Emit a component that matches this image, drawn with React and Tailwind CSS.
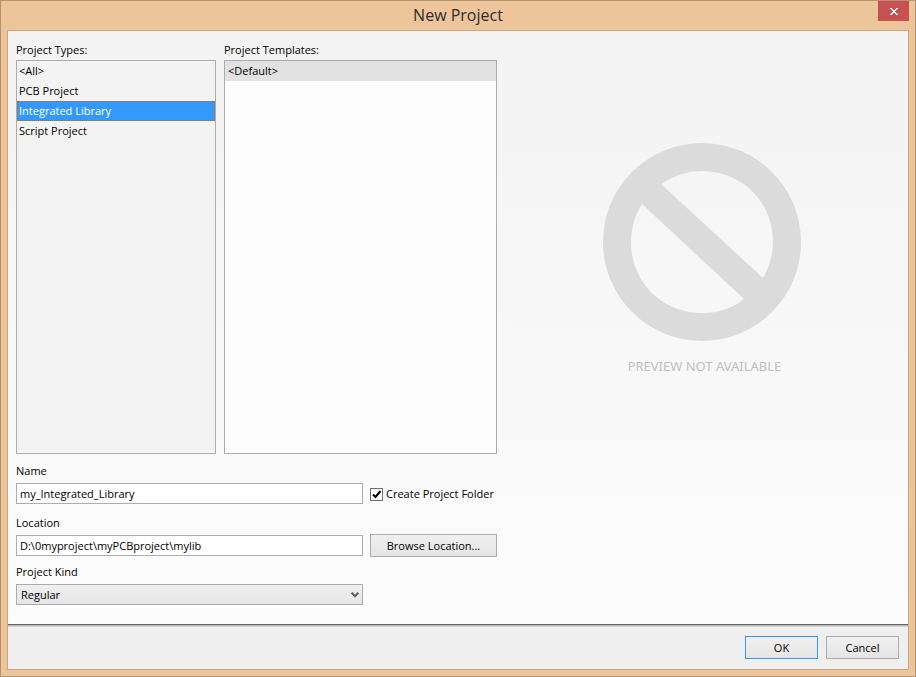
import { useState } from "react";

const projectTypes = ["<All>", "PCB Project", "Integrated Library", "Script Project"];
const templates = ["<Default>"];

function Label({ htmlFor, children }) {
  return (
    <label htmlFor={htmlFor} className="block h-4 leading-4">
      {children}
    </label>
  );
}

function NoPreview() {
  return (
    <svg viewBox="0 0 198 198" className="w-[198px] h-[198px]" aria-hidden="true">
      <path
        fill="#dbdbdb"
        fillRule="evenodd"
        d="M99 0A99 99 0 1 1 99 198A99 99 0 1 1 99 0ZM58 41L160 135Q170 118 170 99C170 58 138 28 99 28Q77 28 58 41ZM39 61Q28 78 28 99C28 140 60 170 99 170Q124 170 141 156Z"
      />
    </svg>
  );
}

function App() {
  const [type, setType] = useState("Integrated Library");
  const [template, setTemplate] = useState("<Default>");
  const [name, setName] = useState("my_Integrated_Library");
  const [location, setLocation] = useState("D:\\0myproject\\myPCBproject\\mylib");
  const [createFolder, setCreateFolder] = useState(true);

  return (
    <div className="min-h-screen flex flex-col bg-[#ecc59a] border border-[#b59370] px-[6px] pb-[6px] text-black text-[11px] font-['Open_Sans','Noto_Sans',sans-serif]">
      <header className="grid grid-cols-[1fr_auto_1fr] items-start h-[29px] shrink-0">
        <h1 className="col-start-2 text-[16px] leading-7 text-[#2d2d2d]">New Project</h1>
        <button aria-label="Close" className="justify-self-end flex items-center justify-center w-[31px] h-5 bg-[#c75050]">
          <svg viewBox="0 0 8 7" className="w-2 h-[7px]" shapeRendering="crispEdges" aria-hidden="true">
            <path fill="#fff" d="M0 0h2v1h1v1h2v-1h1v-1h2v1h-1v1h-1v1h-1v1h1v1h1v1h1v1h-2v-1h-1v-1h-2v1h-1v1h-2v-1h1v-1h1v-1h1v-1h-1v-1h-1v-1h-1z" />
          </svg>
        </button>
      </header>

      <main className="flex-1 flex flex-col border border-[#c9a580] bg-[#efefef]">
        <div className="flex-1 grid grid-cols-[481fr_411fr] pl-2 bg-linear-to-b from-[#f3f3f3] to-[#fcfcfc]">
          <div className="flex flex-col pt-[11px] pb-[19px]">
            <div className="flex-1 grid grid-cols-[200fr_273fr] gap-2">
              <section className="flex flex-col gap-[2px]">
                <h2 className="h-4 leading-4">Project Types:</h2>
                <ul className="flex-1 border border-[#acacac] bg-[#f3f3f3]">
                  {projectTypes.map(t => (
                    <li key={t}>
                      <button
                        onClick={() => setType(t)}
                        className={`block w-full h-5 px-px text-left leading-[18px] border border-dotted ${type === t ? "bg-[#3399ff] text-white border-[#cc6600]" : "border-transparent"}`}
                      >
                        {t}
                      </button>
                    </li>
                  ))}
                </ul>
              </section>
              <section className="flex flex-col gap-[2px]">
                <h2 className="h-4 leading-4">Project Templates:</h2>
                <ul className="flex-1 border border-[#acacac] bg-[#fdfdfd]">
                  {templates.map(t => (
                    <li key={t}>
                      <button
                        onClick={() => setTemplate(t)}
                        className={`block w-full h-5 px-[3px] text-left leading-5 ${template === t ? "bg-[#e2e2e2]" : ""}`}
                      >
                        {t}
                      </button>
                    </li>
                  ))}
                </ul>
              </section>
            </div>

            <div className="mt-[9px]">
              <Label htmlFor="name">Name</Label>
              <div className="mt-1 grid grid-cols-[347fr_127fr] gap-[7px] items-center">
                <input id="name" value={name} onChange={e => setName(e.target.value)} className="w-full h-[21px] px-[3px] pb-px border border-[#abadb3] bg-white outline-none" />
                <label className="flex items-center gap-[3px] pt-[2px] whitespace-nowrap">
                  <span className="relative w-[13px] h-[13px]">
                    <input
                      type="checkbox"
                      checked={createFolder}
                      onChange={e => setCreateFolder(e.target.checked)}
                      className="peer block appearance-none w-[13px] h-[13px] border border-[#707070] bg-white"
                    />
                    <svg viewBox="0 0 13 13" className="absolute inset-0 hidden peer-checked:block pointer-events-none" aria-hidden="true">
                      <path d="M3 6.5L5.5 9L10.5 3" fill="none" stroke="#000" strokeWidth="2" />
                    </svg>
                  </span>
                  Create Project Folder
                </label>
              </div>
            </div>

            <div className="mt-[11px]">
              <Label htmlFor="location">Location</Label>
              <div className="mt-[3px] grid grid-cols-[347fr_127fr] gap-[7px] items-center">
                <input id="location" value={location} onChange={e => setLocation(e.target.value)} className="w-full h-[21px] px-[3px] pb-px border border-[#abadb3] bg-white outline-none" />
                <button className="h-[23px] pt-px border border-[#acacac] bg-linear-to-b from-[#f0f0f0] to-[#e5e5e5]">Browse Location...</button>
              </div>
            </div>

            <div className="mt-[7px]">
              <Label htmlFor="kind">Project Kind</Label>
              <div className="mt-1 grid grid-cols-[347fr_127fr] gap-[7px]">
                <div className="relative">
                  <select id="kind" className="block appearance-none w-full h-[21px] px-1 pt-px border border-[#acacac] bg-linear-to-b from-[#f0f0f0] to-[#e5e5e5] outline-none">
                    <option>Regular</option>
                  </select>
                  <svg viewBox="0 0 8 6" className="absolute right-1 top-2 w-2 h-[6px] pointer-events-none" aria-hidden="true">
                    <path d="M.7 .7L4 4.2L7.3 .7" fill="none" stroke="#606060" strokeWidth="2" />
                  </svg>
                </div>
              </div>
            </div>
          </div>

          <div className="flex flex-col items-center pt-28 pr-[2px]">
            <NoPreview />
            <p className="mt-4 pl-[6px] text-[13px] leading-[18px] text-[#bfbfbf] font-['Noto_Sans',sans-serif]">PREVIEW NOT AVAILABLE</p>
          </div>
        </div>

        <footer className="border-t border-[#696969]">
          <div className="h-px bg-[#b4b4b4]" />
          <div className="h-px bg-[#d8d8d8]" />
          <div className="flex justify-end gap-2 pt-[9px] pb-[10px] pr-[9px]">
            <button className="w-[73px] h-[23px] pt-px border border-[#3399ff] bg-linear-to-b from-[#f0f0f0] to-[#e5e5e5]">OK</button>
            <button className="w-[73px] h-[23px] pt-px border border-[#acacac] bg-linear-to-b from-[#f0f0f0] to-[#e5e5e5]">Cancel</button>
          </div>
        </footer>
      </main>
    </div>
  );
}

export default App;
